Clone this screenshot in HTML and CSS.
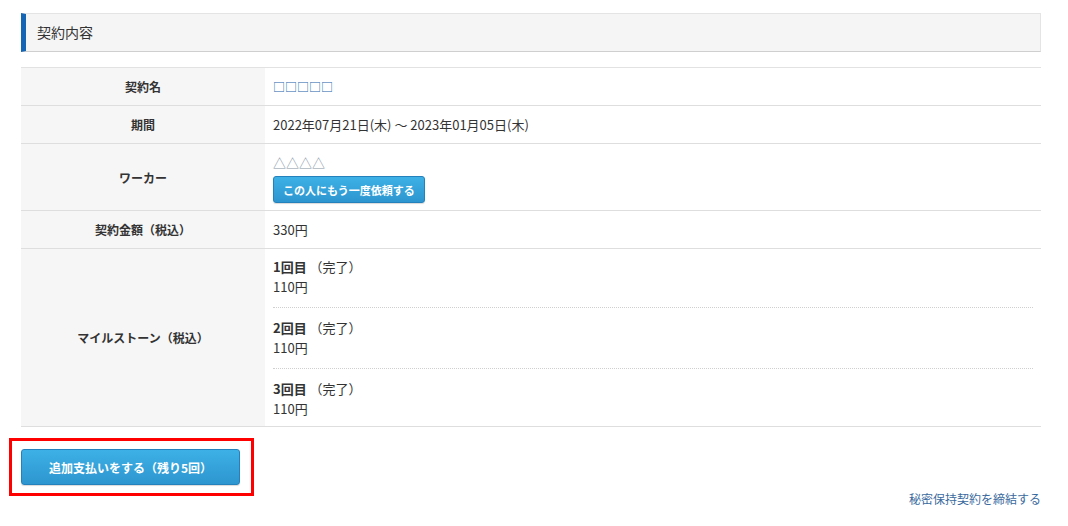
FILE: index.html
```html
<!DOCTYPE html>
<html lang="ja">
<head>
    <meta charset="UTF-8">
    <title>契約内容</title>
    <link rel="stylesheet" href="styles.css">
</head>
<body>
    <div class="container">
        <div class="section-title">契約内容</div>

        <table class="contract-table">
            <tr>
                <th>契約名</th>
                <td><a href="#" class="link">□□□□□</a></td>
            </tr>
            <tr>
                <th>期間</th>
                <td>2022年07月21日(木) ～ 2023年01月05日(木)</td>
            </tr>
            <tr>
                <th>ワーカー</th>
                <td class="worker">
                    <div class="worker-name">△△△△</div>
                    <button class="btn btn-small">この人にもう一度依頼する</button>
                </td>
            </tr>
            <tr>
                <th>契約金額（税込）</th>
                <td>330円</td>
            </tr>
            <tr>
                <th>マイルストーン（税込）</th>
                <td class="milestones">
                    <div class="milestone">
                        <div><strong>1回目</strong> （完了）</div>
                        <div>110円</div>
                    </div>
                    <div class="milestone">
                        <div><strong>2回目</strong> （完了）</div>
                        <div>110円</div>
                    </div>
                    <div class="milestone">
                        <div><strong>3回目</strong> （完了）</div>
                        <div>110円</div>
                    </div>
                </td>
            </tr>
        </table>

        <div class="highlight">
            <button class="btn btn-large">追加支払いをする（残り5回）</button>
        </div>

        <div class="nda">
            <a href="#">秘密保持契約を締結する</a>
        </div>
    </div>
</body>
</html>
```

FILE: styles.css
```css
* {
    margin: 0;
    padding: 0;
    box-sizing: border-box;
}

body {
    font-family: "Noto Sans CJK JP", "Noto Sans", sans-serif;
    font-size: 13px;
    color: #333;
    background: #fff;
}

.container {
    padding: 13px 27px 0 21px;
}

.section-title {
    background: #f5f5f5;
    border: 1px solid #e4e4e4;
    border-bottom-color: #cfcfcf;
    border-left: 5px solid #1565b5;
    height: 39px;
    line-height: 37px;
    padding-left: 11px;
    font-size: 14px;
    color: #333;
}

.contract-table {
    width: 100%;
    margin-top: 15px;
    border-collapse: collapse;
    border-top: 1px solid #e2e2e2;
}

.contract-table tr {
    border-bottom: 1px solid #dedede;
}

.contract-table th {
    width: 244px;
    background: #f6f6f6;
    font-size: 12px;
    font-weight: bold;
    text-align: center;
    vertical-align: middle;
    padding: 9px 8px 8px;
    line-height: 20px;
}

.contract-table td {
    padding: 9px 8px 8px;
    line-height: 20px;
    vertical-align: middle;
}

.link {
    color: #1a64ad;
    text-decoration: none;
    font-size: 12px;
}

.worker-name {
    color: #8394a5;
    line-height: 19px;
}

.contract-table td.worker {
    padding-bottom: 7px;
}

.btn {
    font-family: inherit;
    color: #fff;
    font-weight: bold;
    border: 1px solid #2581bb;
    border-radius: 3px;
    background: linear-gradient(#3db1e6, #2d95cf);
    cursor: pointer;
    box-shadow: 0 1px 1px rgba(0, 0, 0, 0.15);
}

.btn-small {
    display: block;
    margin-top: 4px;
    height: 27px;
    padding: 0 9px;
    font-size: 11px;
}

.contract-table td.milestones {
    padding-top: 8px;
    padding-bottom: 7px;
}

.milestone {
    padding: 10px 0;
    border-bottom: 1px dotted #cfcfcf;
}

.milestone:first-child {
    padding-top: 0;
}

.milestone:last-child {
    border-bottom: none;
    padding-bottom: 0;
}

.highlight {
    display: inline-block;
    margin: 11px 0 0 -12px;
    border: 3px solid #f00;
    padding: 8px 11px 8px 9px;
}

.btn-large {
    display: block;
    width: 219px;
    height: 36px;
    font-size: 12px;
}

.nda {
    text-align: right;
    margin-top: -6px;
    font-size: 12px;
    line-height: 18px;
}

.nda a {
    color: #3a6a9e;
    text-decoration: none;
}
```
